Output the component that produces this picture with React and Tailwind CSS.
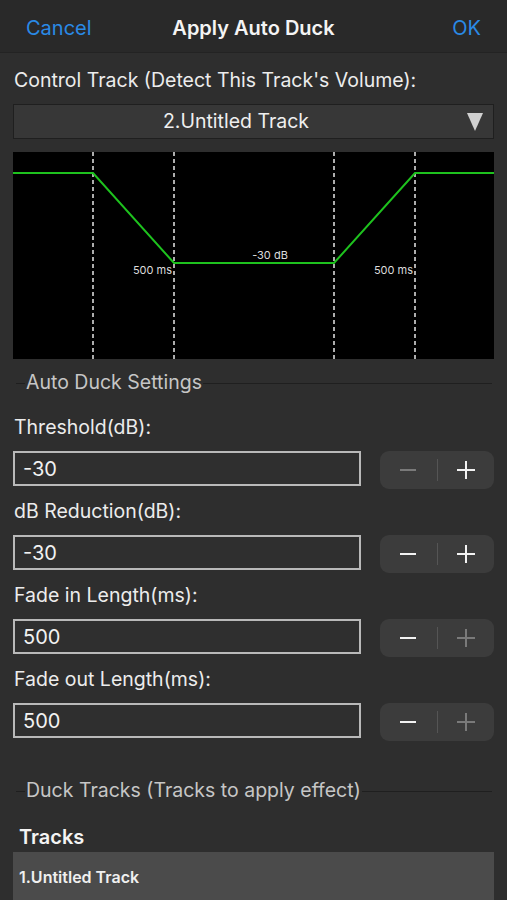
import React from "react";

const font = { fontFamily: "Inter, 'Liberation Sans', sans-serif" };

function Minus({ dim }) {
  return (
    <svg width="18" height="18" viewBox="0 0 18 18">
      <line x1="1" y1="9" x2="17" y2="9" stroke={dim ? "#7a7a7a" : "#f2f2f2"} strokeWidth="2" />
    </svg>
  );
}

function Plus({ dim }) {
  const c = dim ? "#7a7a7a" : "#f2f2f2";
  return (
    <svg width="20" height="20" viewBox="0 0 20 20">
      <line x1="1" y1="10" x2="19" y2="10" stroke={c} strokeWidth="2" />
      <line x1="10" y1="1" x2="10" y2="19" stroke={c} strokeWidth="2" />
    </svg>
  );
}

function Field({ label, value, minusDim, plusDim, first }) {
  return (
    <div className={first ? "mt-[18px]" : "mt-[8px]"}>
      <div className="h-[28px] leading-[28px] text-[19.5px] text-[#ececec] pl-[1px]">{label}</div>
      <div className="mt-[10px] flex items-start gap-[19px]">
        <div className="w-[348px] h-[35px] border-2 border-[#b9b9b9] bg-[#2f2f2f] flex items-center pl-[8px] text-[20px] text-[#f2f2f2]">
          {value}
        </div>
        <div className="flex-1 h-[38px] rounded-[9px] bg-[#3c3c3c] flex items-center">
          <div className="flex-1 flex justify-center"><Minus dim={minusDim} /></div>
          <div className="w-px h-[22px] bg-[#555]" />
          <div className="flex-1 flex justify-center"><Plus dim={plusDim} /></div>
        </div>
      </div>
    </div>
  );
}

function SectionHead({ title, className }) {
  return (
    <div className={`flex items-center h-[24px] pl-[3px] pr-[2px] ${className}`}>
      <div className="w-[9px] h-px bg-[#1f1f1f]" />
      <span className="text-[19.5px] text-[#c6c6c6] whitespace-nowrap px-[1px]">{title}</span>
      <div className="flex-1 h-px bg-[#1f1f1f]" />
    </div>
  );
}

function Chart() {
  const xs = [80, 161, 321, 402];
  return (
    <svg className="block mt-[13px]" width="481" height="207" viewBox="0 0 481 207">
      <rect width="481" height="207" fill="#000" />
      {xs.map((x) => (
        <line key={x} x1={x} y1="0" x2={x} y2="207" stroke="#e6e6e6" strokeWidth="1.5" strokeDasharray="4 3" />
      ))}
      <polyline
        points="0,21 80,21 161,111 321,111 402,21 481,21"
        fill="none"
        stroke="#1ec21e"
        strokeWidth="2"
      />
      <text x="159" y="122" textAnchor="end" fontSize="11" fill="#dcdcdc" fontFamily="Inter, 'Liberation Sans', sans-serif">500 ms</text>
      <text x="400" y="122" textAnchor="end" fontSize="11" fill="#dcdcdc" fontFamily="Inter, 'Liberation Sans', sans-serif">500 ms</text>
      <text x="257" y="107" textAnchor="middle" fontSize="11" fill="#dcdcdc" fontFamily="Inter, 'Liberation Sans', sans-serif">-30 dB</text>
    </svg>
  );
}

export default function App() {
  return (
    <div className="w-[507px] h-[900px] overflow-hidden bg-[#2e2e2e]" style={font}>
      <div className="h-[53px] pt-[4px] bg-[#292929] border-b border-[#232323] flex items-center justify-between px-[26px] relative">
        <span className="text-[20px] text-[#2a8ae6]">Cancel</span>
        <span className="absolute left-0 right-0 text-center text-[20px] font-semibold text-[#f4f4f4] pointer-events-none">Apply Auto Duck</span>
        <span className="text-[20px] text-[#2a8ae6]">OK</span>
      </div>

      <div className="px-[13px]">
        <div className="mt-[13px] h-[28px] leading-[28px] text-[19.5px] text-[#ececec] pl-[1px]">
          Control Track (Detect This Track's Volume):
        </div>
        <div className="mt-[10px] h-[35px] bg-[#373737] border border-[#1f1f1f] flex items-center pr-[35px] relative">
          <span className="flex-1 text-center text-[19.5px] text-[#efefef]">2.Untitled Track</span>
          <svg className="absolute right-[10px] top-[8px]" width="16" height="18" viewBox="0 0 16 18">
            <polygon points="0,0 16,0 8,18" fill="#d0d0d0" />
          </svg>
        </div>

        <Chart />

        <SectionHead title="Auto Duck Settings" className="mt-[12px]" />

        <Field label="Threshold(dB):" value="-30" minusDim first />
        <Field label="dB Reduction(dB):" value="-30" />
        <Field label="Fade in Length(ms):" value="500" plusDim />
        <Field label="Fade out Length(ms):" value="500" plusDim />

        <SectionHead title="Duck Tracks (Tracks to apply effect)" className="mt-[38px]" />

        <div className="mt-[20px] h-[28px] leading-[28px] text-[20px] font-semibold text-[#f4f4f4] pl-[6px]">Tracks</div>
        <div className="mt-[1px] h-[60px] bg-[#4b4b4b] pl-[6px] pt-[13px] text-[16px] font-semibold text-[#f0f0f0]">
          1.Untitled Track
        </div>
      </div>
    </div>
  );
}
